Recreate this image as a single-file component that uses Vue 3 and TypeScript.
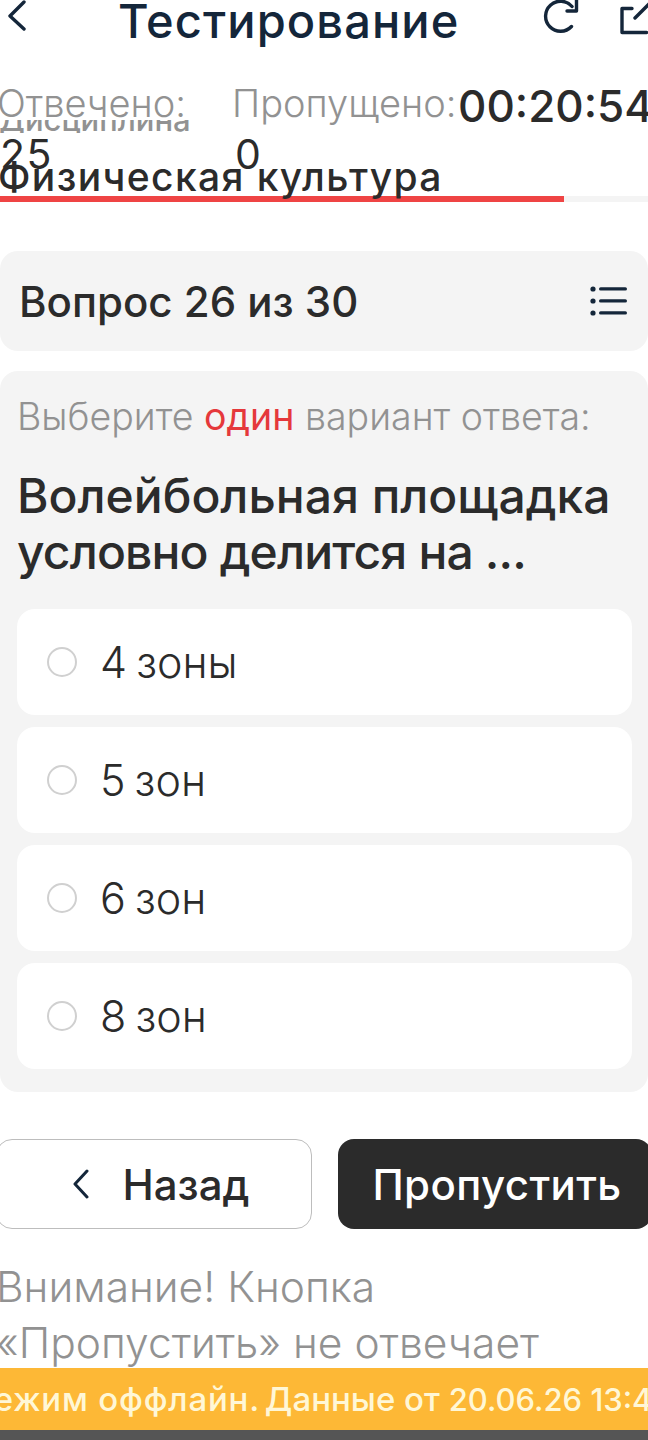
<script setup lang="ts">
const options: string[] = ['4 зоны', '5 зон', '6 зон', '8 зон']
</script>

<template>
  <div class="page">
    <header class="header">
      <svg class="back" width="26" height="34" viewBox="0 0 26 34"><path d="M24 1 L10 15 L24 28" fill="none" stroke="#14263a" stroke-width="3.4" stroke-linecap="round" stroke-linejoin="round"/></svg>
      <h1 class="title">Тестирование</h1>
      <svg class="reload" width="36" height="36" viewBox="0 0 36 36"><path d="M31 4.5 A15 15 0 1 0 30.5 24.5" fill="none" stroke="#14263a" stroke-width="3.4" stroke-linecap="round"/><path d="M35.5 -3 V9 H26" fill="none" stroke="#14263a" stroke-width="3.4" stroke-linecap="round" stroke-linejoin="round"/></svg>
      <svg class="share" width="30" height="36" viewBox="0 0 30 36"><path d="M13 6.5 H3 V30.5 H27.5 M16 16 L32 0" fill="none" stroke="#14263a" stroke-width="3.4" stroke-linecap="round" stroke-linejoin="round"/></svg>
    </header>

    <section class="meta">
      <div class="discipline">Дисциплина</div>
      <div class="stats">
        <div class="stat"><span class="stat-label">Отвечено:</span><span class="stat-value">25</span></div>
        <div class="stat"><span class="stat-label">Пропущено:</span><span class="stat-value">0</span></div>
        <div class="timer">00:20:54</div>
      </div>
      <div class="subject">Физическая культура</div>
    </section>

    <div class="progress"><div class="progress-fill" style="width: 87%"></div></div>

    <div class="qhead">
      <span class="qnum">Вопрос 26 из 30</span>
      <svg width="38" height="30" viewBox="2 0 38 30"><g fill="#14263a"><circle cx="5" cy="3" r="2.6"/><circle cx="5" cy="15" r="2.6"/><circle cx="5" cy="27" r="2.6"/><rect x="11" y="1.2" width="28" height="3.4" rx="1.7"/><rect x="11" y="13.2" width="28" height="3.4" rx="1.7"/><rect x="11" y="25.2" width="28" height="3.4" rx="1.7"/></g></svg>
    </div>

    <div class="qcard">
      <p class="hint">Выберите <span class="red">один</span> вариант ответа:</p>
      <h2 class="question">Волейбольная площадка <span class="line2">условно делится на ...</span></h2>
      <div class="options">
        <label v-for="o in options" :key="o" class="option"><span class="radio"></span><span class="otext">{{ o }}</span></label>
      </div>
    </div>

    <div class="actions">
      <button class="btn ghost"><svg width="18" height="30" viewBox="0 0 18 30"><path d="M15 2 L3 15 L15 28" fill="none" stroke="#14263a" stroke-width="3" stroke-linecap="round" stroke-linejoin="round"/></svg>Назад</button>
      <button class="btn dark">Пропустить</button>
    </div>

    <p class="note">Внимание! Кнопка «Пропустить» не отвечает</p>

    <div class="banner"><span class="lead">Режим оффлайн.</span> Данные от <span class="date">20.06.26 13:45</span></div>
    <div class="bottom"></div>
  </div>
</template>

<style scoped>
.page { width: 648px; height: 1440px; overflow: hidden; position: relative; background: #fff; font-family: Inter, "Noto Sans", sans-serif; color: #2b2b2b; }
.header { height: 46px; display: flex; align-items: center; }
.back { margin-top: -10px; flex: none; overflow: visible; }
.title { margin: -4px 0 0 92px; width: 385px; flex: none; font-size: 47px; line-height: 46px; font-weight: 500; letter-spacing: 1.1px; color: #14263a; white-space: nowrap; }
.reload { flex: none; margin: -6px 0 0 38px; overflow: visible; }
.share { flex: none; margin: -6px 0 0 42px; overflow: visible; }
.meta { height: 150px; position: relative; }
.discipline { position: absolute; left: -1px; top: 74px; height: 13px; overflow: hidden; font-size: 31px; line-height: 0; padding-top: 0; font-weight: 500; color: #929292; white-space: nowrap; }
.stats { position: absolute; left: -3px; top: 34px; width: 660px; display: flex; }
.stat { display: flex; flex-direction: column; width: 235px; }
.stat-label { font-size: 38px; line-height: 46px; font-weight: 300; color: #929292; white-space: nowrap; }
.stat-value { font-size: 41px; line-height: 48px; letter-spacing: 1.5px; color: #2b2b2b; margin: 4px 0 0 3px; }
.timer { position: absolute; left: 461px; top: 0; font-size: 44px; line-height: 52px; font-weight: 500; white-space: nowrap; }
.subject { position: absolute; left: -2px; top: 107px; font-size: 39px; line-height: 48px; font-weight: 500; letter-spacing: 1.4px; white-space: nowrap; }
.progress { height: 6px; background: #f4f4f4; }
.progress-fill { height: 100%; background: #ef4444; }
.qhead { margin-top: 49px; height: 100px; background: #f4f4f4; border-radius: 18px; display: flex; align-items: center; justify-content: space-between; padding: 0 20px 0 19px; }
.qnum { font-size: 42px; font-weight: 500; }
.qcard { margin-top: 20px; height: 721px; box-sizing: border-box; background: #f4f4f4; border-radius: 18px; padding: 24px 16px 0 17px; }
.hint { margin: 0; font-size: 37.5px; line-height: 44px; font-weight: 300; color: #929292; white-space: nowrap; }
.red { color: #e5383b; font-weight: 400; }
.question { margin: 29px 0 0; font-size: 48px; line-height: 56px; font-weight: 500; }
.line2 { letter-spacing: -0.85px; }
.options { margin-top: 29px; display: flex; flex-direction: column; gap: 12px; }
.option { height: 106px; background: #fff; border-radius: 18px; display: flex; align-items: center; padding-left: 30px; }
.radio { width: 26px; height: 26px; border: 2px solid #d0d0d0; border-radius: 50%; margin-top: -1px; }
.otext { margin-left: 23px; font-size: 43px; font-weight: 300; word-spacing: -3px; }
.actions { margin: 47px -4px 0 -4px; display: flex; gap: 26px; }
.btn { height: 90px; border-radius: 16px; box-sizing: border-box; font-family: inherit; font-size: 42px; font-weight: 500; display: flex; align-items: center; justify-content: center; }
.ghost { width: 316px; background: #fff; border: 1px solid #bdbdbd; color: #2b2b2b; gap: 32px; padding-left: 20px; }
.dark { flex: 1; background: #2b2b2b; border: none; color: #fff; letter-spacing: 0.4px; padding-left: 10px; }
.note { margin: 30px 0 0 -4px; width: 600px; font-size: 42.5px; line-height: 56px; font-weight: 300; color: #929292; }
.banner { position: absolute; left: 0; top: 1368px; width: 648px; height: 62px; box-sizing: border-box; padding-left: 0; text-indent: -28px; background: #fdb836; color: #fff7d6; font-size: 33px; font-weight: 500; line-height: 62px; white-space: pre; overflow: hidden; }
.lead { letter-spacing: 0.8px; margin-right: -4px; }
.date { font-size: 31px; }
.bottom { position: absolute; left: 0; right: 0; top: 1430px; height: 10px; background: #555; }
</style>
